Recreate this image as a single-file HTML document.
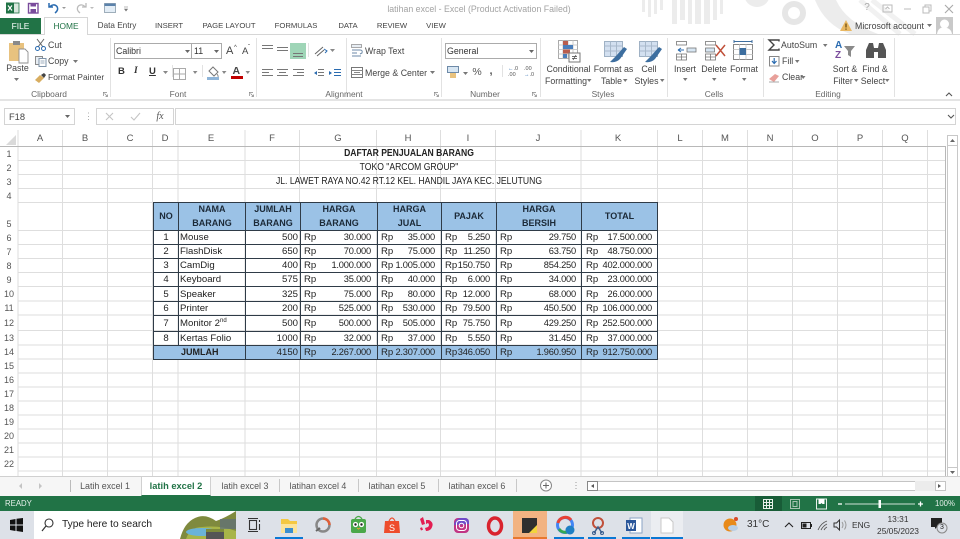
<!DOCTYPE html>
<html><head><meta charset="utf-8"><style>
html,body{margin:0;padding:0}
body{width:960px;height:539px;position:relative;overflow:hidden;background:#fff;font:9px "Liberation Sans",sans-serif;color:#444}
#w{position:absolute;left:0;top:0;width:960px;height:539px;overflow:hidden;background:#fff;filter:blur(.35px)}
.t{position:absolute;white-space:nowrap;line-height:12px}
.c{transform:translateX(-50%)}
.a{position:absolute;box-sizing:border-box}
svg{position:absolute;overflow:visible}
.h{position:absolute;width:30px;margin-left:-15px;text-align:center;top:132px;line-height:14px;font-size:9.5px;color:#555}
.r{position:absolute;left:0;width:18px;text-align:center;line-height:14px;font-size:9px;color:#555}
.s{font:10px/14px "Liberation Sans",sans-serif;color:#222;position:absolute;white-space:nowrap;transform:translateX(-50%) scaleX(.86)}
.u{font-size:7.7px}
.k{font-size:8.9px;color:#555}
table{position:absolute;left:153px;top:202px;border-collapse:collapse;table-layout:fixed;width:504px;font:10px/13px "Liberation Sans",sans-serif;color:#222}
td{border:1px solid #2f3b47;padding:0 6px 0 3px;height:13px;line-height:13px;white-space:nowrap;overflow:hidden;text-align:right;font-size:9.3px;letter-spacing:-.2px}
td:nth-child(7){padding-right:5px}
td:nth-child(8){padding:0 5px 0 4px}
td.m{text-align:center;padding:0;letter-spacing:0;font-size:9.6px}
td.l{text-align:left;padding:0 0 0 1px;letter-spacing:0;font-size:9.6px}
td.n{padding-right:2px;letter-spacing:0;font-size:9.6px}
tr.b td,th{background:#9bc2e6}
tr.b td:nth-child(6){padding-right:5px}
tr.b td:nth-child(7){padding:0 5px 0 4px}
tr.b td:nth-child(5){padding-right:6px}
th{border:1px solid #2f3b47;padding:0;font-size:9px;line-height:13.5px;font-weight:bold;color:#1c2a38}
i{font-style:normal;float:left;letter-spacing:0;font-size:9.6px}
sup{font-size:6px;line-height:0}
</style></head><body><div id="w">

<!-- watermark -->
<svg width="960" height="35" style="left:0;top:0">
<g fill="#ececec"><rect x="642" y="0" width="3" height="12"/><rect x="648" y="0" width="3" height="17"/><rect x="654" y="0" width="3" height="14"/><rect x="660" y="0" width="3" height="10"/><rect x="672" y="0" width="5" height="24"/><rect x="680" y="0" width="5" height="20"/><rect x="688" y="0" width="4" height="24"/><rect x="695" y="0" width="6" height="24"/><rect x="704" y="0" width="6" height="24"/><rect x="713" y="0" width="4" height="20"/><rect x="720" y="0" width="3" height="14"/><circle cx="757" cy="-6" r="13"/></g>
<circle cx="794" cy="13" r="9" fill="none" stroke="#e6e6e6" stroke-width="6"/>
<path d="M815 0Q825 25 850 34L878 34Q846 22 836 0Z" fill="#ececec"/>
<path d="M860 0L900 34M872 0L915 34" stroke="#f1f1f1" stroke-width="5"/>
</svg>

<!-- QAT -->
<svg width="140" height="17" style="left:0;top:0">
<rect x="11" y="3" width="8" height="10" fill="#d8e7dd" stroke="#217346" stroke-width=".8"/><rect x="6" y="2.5" width="8" height="11" fill="#217346"/><path d="M8 5.500l4 5M12 5.500l-4 5" stroke="#fff" stroke-width="1.200"/>
<rect x="28.500" y="3.500" width="9.500" height="9.500" fill="#fff" stroke="#7a4c9c" stroke-width="1.400"/><rect x="30.500" y="3.500" width="5.500" height="3" fill="#7a4c9c"/><rect x="30.500" y="9" width="5.500" height="4" fill="#7a4c9c"/>
<path d="M49 3v4h4M49.500 7Q54 3 57 6.500Q59 10 55 13" fill="none" stroke="#2a6bb0" stroke-width="1.500"/><path d="M62 7l2 2 2-2z" fill="#999"/>
<path d="M86 3v4h-4M85.500 7Q81 3 78 6.500Q76 10 80 13" fill="none" stroke="#bbb" stroke-width="1.300"/><path d="M90 7l2 2 2-2z" fill="#bbb"/>
<rect x="104.500" y="3.500" width="11" height="9" fill="#e3edf6" stroke="#8a9bab" stroke-width=".8"/><rect x="104.500" y="3.500" width="11" height="2.500" fill="#5b82ab"/>
<path d="M124 7h4M124.500 9l1.500 2 1.500-2z" stroke="#777" fill="#777" stroke-width=".6"/>
</svg>
<div class="t c" style="left:479px;top:3px;font-size:8.800px;color:#a3a3a3">latihan excel - Excel (Product Activation Failed)</div>

<!-- window controls -->
<div class="t c" style="left:867px;top:2px;font-size:10px;color:#aaa">?</div>
<svg width="100" height="17" style="left:860px;top:0"><rect x="23" y="5" width="9" height="7" fill="none" stroke="#bbb"/><path d="M25.500 9l2-2 2 2" fill="none" stroke="#bbb"/><path d="M44 9h7" stroke="#bbb"/><rect x="65" y="5" width="6" height="6" fill="none" stroke="#bbb"/><rect x="63" y="7" width="6" height="6" fill="#fff" stroke="#bbb"/><path d="M85 5l8 8M93 5l-8 8" stroke="#aaa" stroke-width="1.100"/></svg>

<!-- tabs -->
<div class="a" style="left:0;top:18px;width:41px;height:17px;background:#217346"></div>
<div class="t c" style="left:20.500px;top:20px;color:#fff;font-size:8.400px">FILE</div>
<div class="a" style="left:0;top:34px;width:960px;height:1px;background:#d6d6d6"></div>
<div class="a" style="left:44px;top:17px;width:44px;height:18px;background:#fff;border:1px solid #d6d6d6;border-bottom:0"></div>
<div class="t c" style="left:66px;top:20px;color:#217346;font-size:8.400px">HOME</div>
<div class="t c" style="left:117px;top:20px;font-size:8.200px">Data Entry</div>
<div class="t c u" style="left:169px;top:20px">INSERT</div>
<div class="t c u" style="left:229px;top:20px">PAGE LAYOUT</div>
<div class="t c u" style="left:296px;top:20px">FORMULAS</div>
<div class="t c u" style="left:348px;top:20px">DATA</div>
<div class="t c u" style="left:392px;top:20px">REVIEW</div>
<div class="t c u" style="left:436px;top:20px">VIEW</div>
<svg width="14" height="14" style="left:840px;top:19px"><path d="M6 1L12 12H0Z" fill="#e9b863"/><path d="M6 4.500v4M6 9.500v1.300" stroke="#5a3b00" stroke-width="1.100"/></svg>
<div class="t" style="left:855px;top:20px;font-size:8.800px;color:#444">Microsoft account</div>
<svg width="6" height="4" style="left:927px;top:24px"><path d="M0 0h5L2.500 3z" fill="#777"/></svg>
<svg width="17" height="17" style="left:936px;top:17px"><rect width="17" height="17" fill="#c9c9c9"/><circle cx="8.500" cy="7" r="4.500" fill="#fff"/><path d="M1 17Q2 10 8.500 10.500T16 17z" fill="#fff"/></svg>

<!-- ribbon separators -->
<div class="a" style="left:0;top:99px;width:960px;height:2px;background:#e4e4e4"></div>
<svg width="960" height="65" style="left:0;top:35px"><path d="M110.500 3V62M256.500 3V62M346.500 3V62M441.500 3V62M540.500 3V62M667.500 3V62M763.500 3V62M894.500 3V62M172.500 30V42M202.500 30V42M308.500 8V22M502.500 30V42" stroke="#e2e2e2"/></svg>

<!-- clipboard -->
<svg width="24" height="24" style="left:8px;top:40px"><rect x="1" y="3" width="15" height="18" fill="#e8c27f"/><rect x="5" y="1" width="7" height="4" fill="#8a8a8a"/><path d="M11 9h6l3 3v11H11z" fill="#fff" stroke="#8f8f8f" stroke-width=".9"/></svg>
<div class="t c" style="left:17.500px;top:62px;font-size:8.800px">Paste</div>
<svg width="6" height="4" style="left:14px;top:78px"><path d="M0 0h5L2.500 3z" fill="#777"/></svg>
<svg width="12" height="12" style="left:35px;top:39px"><path d="M2 0l6 8M9 0L3 8" stroke="#666" stroke-width="1"/><circle cx="2.500" cy="9.500" r="2" fill="none" stroke="#2a6bb0"/><circle cx="8.500" cy="9.500" r="2" fill="none" stroke="#2a6bb0"/></svg>
<div class="t" style="left:48px;top:39px;font-size:8.800px">Cut</div>
<svg width="12" height="11" style="left:35px;top:56px"><rect x=".5" y=".5" width="7" height="8" fill="#e8eef4" stroke="#8a8a8a"/><rect x="4" y="2.500" width="7" height="8" fill="#fff" stroke="#7e93a8"/><path d="M5.500 5h4M5.500 7h4" stroke="#7e93a8" stroke-width=".7"/></svg>
<div class="t" style="left:48px;top:55px;font-size:8.800px">Copy</div>
<svg width="6" height="4" style="left:73px;top:60px"><path d="M0 0h5L2.500 3z" fill="#777"/></svg>
<svg width="12" height="12" style="left:35px;top:72px"><path d="M0 8l5-5 4 3-5 5z" fill="#d8ad60"/><path d="M6 3l3-2 2 2-2 3z" fill="#444"/></svg>
<div class="t" style="left:48px;top:71px;font-size:8.500px">Format Painter</div>
<div class="t c" style="left:49px;top:88px;font-size:8.400px;color:#666">Clipboard</div>
<svg width="5" height="5" style="left:103px;top:92px"><path d="M0 .500h4M.5 0v4M1.500 1.500L4.500 4.500M4.500 2.500v2h-2" stroke="#888" fill="none" stroke-width=".7"/></svg>

<!-- font -->
<div class="a" style="left:114px;top:43px;width:78px;height:16px;background:#fff;border:1px solid #ababab"></div>
<div class="a" style="left:191px;top:43px;width:31px;height:16px;background:#fff;border:1px solid #ababab"></div>
<div class="t" style="left:116px;top:45px;font-size:8.800px;color:#333">Calibri</div>
<div class="t" style="left:194px;top:45px;font-size:8.800px;color:#333">11</div>
<svg width="120" height="6" style="left:180px;top:49px"><path d="M5 1h5L7.500 4z" fill="#666"/><path d="M34 1h5L36.500 4z" fill="#666"/></svg>
<div class="t" style="left:226px;top:45px;font-size:11px;color:#444">A</div><div class="t" style="left:234px;top:42px;font-size:6px">^</div>
<div class="t" style="left:242px;top:46px;font-size:9.500px;color:#444">A</div><div class="t" style="left:248px;top:42px;font-size:6px">ˇ</div>
<div class="t" style="left:118px;top:66px;font-size:9.500px;font-weight:bold;color:#333">B</div>
<div class="t" style="left:134px;top:66px;font:italic bold 9.500px 'Liberation Serif',serif;color:#333">I</div>
<div class="t" style="left:149px;top:66px;font-size:9.500px;font-weight:bold;color:#333;text-decoration:underline">U</div>
<svg width="100" height="16" style="left:160px;top:67px"><path d="M3 4h5L5.500 7zM33 4h4.500L35 7zM62 4h4.500L64 7zM85.500 4H90L87.800 7z" fill="#888"/><path d="M13.500 1.500h12v11h-12zM19.500 1.500v11M13.500 7h12" stroke="#aaa" fill="none"/></svg>
<svg width="14" height="14" style="left:206px;top:66px"><path d="M7 1l5 5-4 4-5-5z" fill="#fff" stroke="#777"/><path d="M11 8q1.500 2 1 3" stroke="#888" fill="none"/><rect x="1" y="11" width="12" height="3" fill="#8fb5d9"/></svg>
<div class="t" style="left:232.500px;top:65px;font-size:10.500px;font-weight:bold;color:#444">A</div>
<div class="a" style="left:231px;top:76px;width:12px;height:3px;background:#c00000"></div>

<div class="t c" style="left:178px;top:88px;font-size:8.400px;color:#666">Font</div>
<svg width="5" height="5" style="left:249px;top:92px"><path d="M0 .500h4M.5 0v4M1.500 1.500L4.500 4.500M4.500 2.500v2h-2" stroke="#888" fill="none" stroke-width=".7"/></svg>

<!-- alignment -->
<div class="a" style="left:290px;top:43px;width:16px;height:16px;background:#9fd5b7"></div>
<svg width="90" height="50" style="left:261px;top:42px"><g stroke="#777" stroke-width="1"><path d="M1 3.500h11M1 6.500h11M16 5.500h11M16 8.500h11M32 11.500h10M32 14.500h10"/><path d="M1 27.500h11M1 30.500h7M1 33.500h11M16 27.500h11M18 30.500h7M16 33.500h11M32 27.500h11M36 30.500h7M32 33.500h11M57 27.500h6M57 30.500h6M57 33.500h6"/><path d="M73 27.500h7M73 30.500h7M73 33.500h7" stroke="#2a6bb0"/></g><path d="M56 29l-3 2 3 2zM68 29l3 2-3 2z" fill="#2a6bb0"/><path d="M54 12l8-7M56 14l7-6" stroke="#666"/><path d="M63 7l3 2-2 2" stroke="#2a6bb0" fill="none"/><path d="M69 7h5l-2.500 3z" fill="#888"/></svg>
<svg width="14" height="13" style="left:351px;top:44px"><rect x=".5" y=".5" width="10" height="3" fill="#e8eef4" stroke="#888" stroke-width=".7"/><path d="M1 6h8q3 0 2 3l-2 1M1 9h5M1 12h9" stroke="#6e8aa8" fill="none"/></svg>
<div class="t" style="left:365px;top:45px;font-size:8.800px">Wrap Text</div>
<svg width="13" height="12" style="left:351px;top:67px"><rect x=".5" y=".5" width="11" height="10" fill="#fff" stroke="#777"/><path d="M.5 3.500h11M.5 7.500h11M3 5.500h6" stroke="#888"/></svg>
<div class="t" style="left:365px;top:67px;font-size:8.800px">Merge &amp; Center</div>
<svg width="6" height="4" style="left:430px;top:71px"><path d="M0 0h5L2.500 3z" fill="#777"/></svg>
<div class="t c" style="left:344px;top:88px;font-size:8.400px;color:#666">Alignment</div>
<svg width="5" height="5" style="left:434px;top:92px"><path d="M0 .500h4M.5 0v4M1.500 1.500L4.500 4.500M4.500 2.500v2h-2" stroke="#888" fill="none" stroke-width=".7"/></svg>

<!-- number -->
<div class="a" style="left:445px;top:43px;width:92px;height:16px;background:#fff;border:1px solid #ababab"></div>
<div class="t" style="left:447px;top:45px;font-size:8.800px;color:#333">General</div>
<svg width="6" height="4" style="left:529px;top:50px"><path d="M0 0h5L2.500 3z" fill="#666"/></svg>
<svg width="13" height="13" style="left:447px;top:66px"><rect x=".5" y=".5" width="11" height="6" fill="#d7e6f3" stroke="#6e8aa8"/><rect x="3" y="7" width="6" height="5" fill="#e8c27f"/></svg>
<svg width="6" height="4" style="left:463px;top:72px"><path d="M0 0h5L2.500 3z" fill="#777"/></svg>
<div class="t c" style="left:477px;top:66px;font-size:10.500px;color:#555">%</div>
<div class="t c" style="left:491px;top:65px;font-size:11px;font-weight:bold;color:#555">,</div>
<div class="t" style="left:508px;top:66px;font-size:5.500px;line-height:6px;color:#555"><span style="color:#2a6bb0">←</span>.0<br>.00</div>
<div class="t" style="left:524px;top:66px;font-size:5.500px;line-height:6px;color:#555">.00<br><span style="color:#2a6bb0">→</span>.0</div>
<div class="t c" style="left:485px;top:88px;font-size:8.400px;color:#666">Number</div>
<svg width="5" height="5" style="left:532px;top:92px"><path d="M0 .500h4M.5 0v4M1.500 1.500L4.500 4.500M4.500 2.500v2h-2" stroke="#888" fill="none" stroke-width=".7"/></svg>

<!-- styles -->
<svg width="24" height="24" style="left:558px;top:40px"><rect x=".5" y=".5" width="19" height="18" fill="#fff" stroke="#aaa"/><path d="M.5 5h19M.5 9.500h19M.5 14h19M5 .5v18M10 .5v18M15 .5v18" stroke="#ccc"/><rect x="5" y="1" width="5" height="4" fill="#b95d4d"/><rect x="5" y="5" width="10" height="4" fill="#4a7ebb"/><rect x="5" y="9.500" width="7" height="4" fill="#b95d4d"/><rect x="5" y="14" width="4" height="4" fill="#4a7ebb"/><rect x="11" y="13" width="11" height="9" fill="#fff" stroke="#777"/><path d="M14 16.500h5M14 18.500h5M18 15l-3 5" stroke="#444" stroke-width=".7"/></svg>
<div class="t c" style="left:568.500px;top:63px;font-size:8.800px">Conditional</div>
<div class="t c" style="left:566px;top:74.500px;font-size:8.800px">Formatting</div>
<svg width="5" height="4" style="left:587px;top:79px"><path d="M0 0h4.500L2.200 3z" fill="#777"/></svg>
<svg width="24" height="24" style="left:604px;top:41px"><rect x=".5" y=".5" width="18" height="15" fill="#d3e0f0" stroke="#9fb1c4"/><path d="M.5 5h18M.5 10h18M6.500 .5v15M12.500 .5v15" stroke="#a8b9cb"/><path d="M6 21l6-6 8-9 3 2-7 10q-4 4-10 3z" fill="#3d6e9f"/></svg>
<div class="t c" style="left:613.500px;top:63px;font-size:8.800px">Format as</div>
<div class="t c" style="left:611.500px;top:74.500px;font-size:8.800px">Table</div>
<svg width="5" height="4" style="left:623px;top:79px"><path d="M0 0h4.500L2.200 3z" fill="#777"/></svg>
<svg width="24" height="24" style="left:639px;top:41px"><rect x=".5" y=".5" width="18" height="15" fill="#d3e0f0" stroke="#9fb1c4"/><path d="M.5 5h18M.5 10h18M6.500 .5v15M12.500 .5v15" stroke="#a8b9cb"/><path d="M6 21l6-6 8-9 3 2-7 10q-4 4-10 3z" fill="#3d6e9f"/></svg>
<div class="t c" style="left:649px;top:63px;font-size:8.800px">Cell</div>
<div class="t c" style="left:646.500px;top:74.500px;font-size:8.800px">Styles</div>
<svg width="5" height="4" style="left:660px;top:79px"><path d="M0 0h4.500L2.200 3z" fill="#777"/></svg>
<div class="t c" style="left:603px;top:88px;font-size:8.400px;color:#666">Styles</div>

<!-- cells -->
<svg width="20" height="20" style="left:676px;top:41px"><g fill="#fff" stroke="#777" stroke-width=".8"><rect x=".5" y=".5" width="10" height="3.500"/><rect x="11" y="7" width="9" height="4" fill="#d7e6f3"/><rect x=".5" y="13" width="10" height="6"/><path d="M5.500 13v6M.5 16h10"/></g><path d="M2 9h6M2 9l3-2M2 9l3 2" stroke="#2a6bb0" fill="none"/></svg>
<div class="t c" style="left:685px;top:63px;font-size:8.800px">Insert</div>
<svg width="5" height="4" style="left:683px;top:78px"><path d="M0 0h4.500L2.200 3z" fill="#777"/></svg>
<svg width="22" height="22" style="left:705px;top:41px"><g fill="#fff" stroke="#777" stroke-width=".8"><rect x=".5" y=".5" width="10" height="3.500"/><rect x=".5" y="7" width="9" height="4" fill="#d7e6f3"/><rect x=".5" y="13" width="10" height="6"/><path d="M5.500 13v6M.5 16h10"/></g><path d="M11 4l9 11M20 4l-9 11" stroke="#c0503a" stroke-width="1.500"/></svg>
<div class="t c" style="left:714px;top:63px;font-size:8.800px">Delete</div>
<svg width="5" height="4" style="left:712px;top:78px"><path d="M0 0h4.500L2.200 3z" fill="#777"/></svg>
<svg width="22" height="22" style="left:733px;top:40px"><rect x=".5" y="4.500" width="19" height="15" fill="#fff" stroke="#888"/><path d="M.5 9.500h19M.5 14.500h19M6.500 4.500v15M13 4.500v15" stroke="#ccc"/><rect x="6.500" y="8" width="6.500" height="7" fill="#3d6e9f"/><path d="M1 1.500h18M1 0v3M19 0v3" stroke="#3d6e9f"/></svg>
<div class="t c" style="left:744px;top:63px;font-size:8.800px">Format</div>
<svg width="5" height="4" style="left:742px;top:78px"><path d="M0 0h4.500L2.200 3z" fill="#777"/></svg>
<div class="t c" style="left:714px;top:88px;font-size:8.400px;color:#666">Cells</div>

<!-- editing -->
<svg width="12" height="12" style="left:768px;top:39px"><path d="M11 2.500V1H1l5 5-5 5h10V9.500" fill="none" stroke="#444" stroke-width="1.400"/></svg>
<div class="t" style="left:781px;top:39px;font-size:8.800px">AutoSum</div>
<svg width="5" height="4" style="left:823px;top:44px"><path d="M0 0h4.500L2.200 3z" fill="#777"/></svg>
<svg width="11" height="11" style="left:769px;top:56px"><rect x=".5" y=".5" width="9.500" height="9.500" fill="#fff" stroke="#888"/><path d="M5.200 2v5M3 5l2.200 2.500L7.500 5" stroke="#2a6bb0" fill="none" stroke-width="1.200"/></svg>
<div class="t" style="left:782px;top:55px;font-size:8.800px">Fill</div>
<svg width="5" height="4" style="left:795px;top:60px"><path d="M0 0h4.500L2.200 3z" fill="#777"/></svg>
<svg width="12" height="11" style="left:769px;top:72px"><path d="M0 7l6-5 4 2-5 6z" fill="#e8a09a"/><path d="M0 10h10" stroke="#aaa"/></svg>
<div class="t" style="left:782px;top:71px;font-size:8.800px">Clear</div>
<svg width="5" height="4" style="left:801px;top:76px"><path d="M0 0h4.500L2.200 3z" fill="#777"/></svg>
<div class="t" style="left:835px;top:40px;font-size:10px;font-weight:bold;color:#2a6bb0">A</div>
<div class="t" style="left:835px;top:50px;font-size:10px;font-weight:bold;color:#7a4c9c">Z</div>
<svg width="12" height="12" style="left:844px;top:46px"><path d="M0 0h11L7 5v6L4 9V5z" fill="#8a8a8a"/></svg>
<div class="t c" style="left:845px;top:63px;font-size:8.800px">Sort &amp;</div>
<div class="t c" style="left:843px;top:74.500px;font-size:8.800px">Filter</div>
<svg width="5" height="4" style="left:854px;top:79px"><path d="M0 0h4.500L2.200 3z" fill="#777"/></svg>
<svg width="20" height="18" style="left:866px;top:42px"><path d="M3 1h4l1 5v10H0V8zM13 1h4l3 7v8h-8V6z" fill="#555"/><rect x="8" y="6" width="4" height="4" fill="#555"/></svg>
<div class="t c" style="left:875px;top:63px;font-size:8.800px">Find &amp;</div>
<div class="t c" style="left:873px;top:74.500px;font-size:8.800px">Select</div>
<svg width="5" height="4" style="left:885px;top:79px"><path d="M0 0h4.500L2.200 3z" fill="#777"/></svg>
<div class="t c" style="left:828px;top:88px;font-size:8.400px;color:#666">Editing</div>
<svg width="8" height="5" style="left:945px;top:92px"><path d="M1 4l3-3 3 3" fill="none" stroke="#555" stroke-width="1.100"/></svg>

<!-- formula bar -->
<div class="a" style="left:0;top:101px;width:960px;height:29px;background:#fff"></div>
<div class="a" style="left:4px;top:108px;width:71px;height:17px;background:#fff;border:1px solid #d4d4d4"></div>
<div class="t" style="left:9px;top:111px;font-size:9.300px;color:#444">F18</div>
<svg width="6" height="4" style="left:65px;top:115px"><path d="M0 0h5L2.500 3z" fill="#666"/></svg>
<div class="t" style="left:84px;top:110px;font-size:9px;color:#aaa">⋮</div>
<div class="a" style="left:96px;top:108px;width:78px;height:17px;background:#fff;border:1px solid #d4d4d4"></div>
<svg width="80" height="12" style="left:100px;top:111px"><path d="M6 2l7 7M13 2l-7 7" stroke="#c4c4c4" stroke-width="1.100"/><path d="M31 6l3 3 6-7" fill="none" stroke="#c4c4c4" stroke-width="1.100"/></svg>
<div class="t c" style="left:160px;top:111px;font:italic 10px 'Liberation Serif',serif;color:#555">fx</div>
<div class="a" style="left:175px;top:108px;width:781px;height:17px;background:#fff;border:1px solid #d4d4d4"></div>
<svg width="8" height="5" style="left:947px;top:114px"><path d="M1 1l3 3 3-3" fill="none" stroke="#555" stroke-width="1.100"/></svg>

<!-- grid -->
<svg width="960" height="350" style="left:0;top:130px">
<path d="M18 0V346M62.500 0V346M107.500 0V346M152.500 0V346M178 0V346M245 0V346M299.500 0V346M376.500 0V346M440.500 0V346M495.500 0V346M581 0V346M657.500 0V346M702.500 0V346M747.500 0V346M792.500 0V346M837.500 0V346M882.500 0V346M927.500 0V346" stroke="#dedede" fill="none"/>
<path d="M18 30.500H945M18 44.500H945M18 58.500H945M18 72.500H945M18 100.500H945M18 114.500H945M18 128.500H945M18 142.500H945M18 156.500H945M18 171H945M18 185H945M18 200.500H945M18 215H945M18 229H945M18 243H945M18 257H945M18 271H945M18 285H945M18 299H945M18 313H945M18 327H945M18 341H945" stroke="#dedede" fill="none"/>
<path d="M0 16.500H945.500V346" stroke="#b8b8b8" fill="none"/>
<path d="M6 15L16 15 16 5z" fill="#dadada"/>
</svg>
<div class="h" style="left:40px">A</div><div class="h" style="left:85px">B</div><div class="h" style="left:130px">C</div><div class="h" style="left:165px">D</div><div class="h" style="left:211px">E</div><div class="h" style="left:272px">F</div><div class="h" style="left:338px">G</div><div class="h" style="left:408px">H</div><div class="h" style="left:468px">I</div><div class="h" style="left:538px">J</div><div class="h" style="left:618px">K</div><div class="h" style="left:680px">L</div><div class="h" style="left:725px">M</div><div class="h" style="left:770px">N</div><div class="h" style="left:815px">O</div><div class="h" style="left:860px">P</div><div class="h" style="left:905px">Q</div>
<div class="r" style="top:147px">1</div><div class="r" style="top:161px">2</div><div class="r" style="top:175px">3</div><div class="r" style="top:189px">4</div><div class="r" style="top:217px">5</div><div class="r" style="top:231px">6</div><div class="r" style="top:245px">7</div><div class="r" style="top:259px">8</div><div class="r" style="top:273px">9</div><div class="r" style="top:287px">10</div><div class="r" style="top:301px">11</div><div class="r" style="top:316px">12</div><div class="r" style="top:331px">13</div><div class="r" style="top:345px">14</div><div class="r" style="top:359px">15</div><div class="r" style="top:373px">16</div><div class="r" style="top:387px">17</div><div class="r" style="top:401px">18</div><div class="r" style="top:415px">19</div><div class="r" style="top:429px">20</div><div class="r" style="top:443px">21</div><div class="r" style="top:457px">22</div>

<div class="s" style="left:408.500px;top:147px;font-weight:bold">DAFTAR PENJUALAN BARANG</div>
<div class="s" style="left:408.500px;top:161px">TOKO "ARCOM GROUP"</div>
<div class="s" style="left:408.500px;top:175px">JL. LAWET RAYA NO.42 RT.12 KEL. HANDIL JAYA KEC. JELUTUNG</div>

<table>
<colgroup><col style="width:25px"><col style="width:67px"><col style="width:55px"><col style="width:77px"><col style="width:64px"><col style="width:55px"><col style="width:85px"><col style="width:76px"></colgroup>
<tr style="height:28px"><th>NO</th><th>NAMA<br>BARANG</th><th>JUMLAH<br>BARANG</th><th>HARGA<br>BARANG</th><th>HARGA<br>JUAL</th><th>PAJAK</th><th>HARGA<br>BERSIH</th><th>TOTAL</th></tr>
<tr><td class="m">1</td><td class="l">Mouse</td><td class="n">500</td><td><i>Rp</i>30.000</td><td><i>Rp</i>35.000</td><td><i>Rp</i>5.250</td><td><i>Rp</i>29.750</td><td><i>Rp</i>17.500.000</td></tr>
<tr><td class="m">2</td><td class="l">FlashDisk</td><td class="n">650</td><td><i>Rp</i>70.000</td><td><i>Rp</i>75.000</td><td><i>Rp</i>11.250</td><td><i>Rp</i>63.750</td><td><i>Rp</i>48.750.000</td></tr>
<tr><td class="m">3</td><td class="l">CamDig</td><td class="n">400</td><td><i>Rp</i>1.000.000</td><td><i>Rp</i>1.005.000</td><td><i>Rp</i>150.750</td><td><i>Rp</i>854.250</td><td><i>Rp</i>402.000.000</td></tr>
<tr><td class="m">4</td><td class="l">Keyboard</td><td class="n">575</td><td><i>Rp</i>35.000</td><td><i>Rp</i>40.000</td><td><i>Rp</i>6.000</td><td><i>Rp</i>34.000</td><td><i>Rp</i>23.000.000</td></tr>
<tr style="height:15px"><td class="m">5</td><td class="l">Speaker</td><td class="n">325</td><td><i>Rp</i>75.000</td><td><i>Rp</i>80.000</td><td><i>Rp</i>12.000</td><td><i>Rp</i>68.000</td><td><i>Rp</i>26.000.000</td></tr>
<tr><td class="m">6</td><td class="l">Printer</td><td class="n">200</td><td><i>Rp</i>525.000</td><td><i>Rp</i>530.000</td><td><i>Rp</i>79.500</td><td><i>Rp</i>450.500</td><td><i>Rp</i>106.000.000</td></tr>
<tr style="height:16px"><td class="m">7</td><td class="l">Monitor 2<sup>nd</sup></td><td class="n">500</td><td><i>Rp</i>500.000</td><td><i>Rp</i>505.000</td><td><i>Rp</i>75.750</td><td><i>Rp</i>429.250</td><td><i>Rp</i>252.500.000</td></tr>
<tr><td class="m">8</td><td class="l">Kertas Folio</td><td class="n">1000</td><td><i>Rp</i>32.000</td><td><i>Rp</i>37.000</td><td><i>Rp</i>5.550</td><td><i>Rp</i>31.450</td><td><i>Rp</i>37.000.000</td></tr>
<tr class="b"><td colspan="2" style="text-align:left;padding-left:27px;font-weight:bold;font-size:9px;letter-spacing:0">JUMLAH</td><td class="n">4150</td><td><i>Rp</i>2.267.000</td><td><i>Rp</i>2.307.000</td><td><i>Rp</i>346.050</td><td><i>Rp</i>1.960.950</td><td><i>Rp</i>912.750.000</td></tr>
</table>

<!-- vertical scrollbar -->
<div class="a" style="left:947px;top:135px;width:11px;height:343px;background:#fff;border:1px solid #c8c8c8"></div>
<div class="a" style="left:947px;top:135px;width:11px;height:11px;border:1px solid #c8c8c8;background:#fff"></div>
<div class="a" style="left:947px;top:467px;width:11px;height:11px;border:1px solid #c8c8c8;background:#fff"></div>
<svg width="11" height="343" style="left:947px;top:135px"><path d="M3 7h5L5.500 4zM3 336h5l-2.500 3z" fill="#666"/></svg>

<!-- sheet tabs -->
<div class="a" style="left:0;top:476px;width:960px;height:20px;background:#f6f6f6"></div>
<div class="a" style="left:0;top:476px;width:141px;height:1px;background:#d0d0d0"></div>
<div class="a" style="left:141px;top:476px;width:70px;height:20px;background:#fff;border-left:1px solid #d0d0d0;border-right:1px solid #d0d0d0;border-top:1px solid #d0d0d0;border-bottom:1px solid #217346"></div>
<div class="a" style="left:211px;top:476px;width:749px;height:1px;background:#d0d0d0"></div>
<svg width="60" height="12" style="left:15px;top:480px"><path d="M7 3L4 6l3 3zM24 3l3 3-3 3z" fill="#c4c4c4"/><path d="M55.500 0V12" stroke="#bbb"/></svg>
<div class="t c k" style="left:105px;top:479.500px">Latih excel 1</div>
<div class="t c" style="left:176px;top:479.500px;font-size:9.300px;font-weight:bold;color:#217346">latih excel 2</div>
<div class="t c k" style="left:245px;top:479.500px">latih excel 3</div>
<div class="t c k" style="left:318px;top:479.500px">latihan excel 4</div>
<div class="t c k" style="left:397px;top:479.500px">latihan excel 5</div>
<div class="t c k" style="left:477px;top:479.500px">latihan excel 6</div>
<svg width="320" height="14" style="left:270px;top:479px"><path d="M9.500 0V13M88.500 0V13M168.500 0V13M246.500 0V13" stroke="#c8c8c8"/><circle cx="276" cy="6.500" r="5.500" fill="#fff" stroke="#888"/><path d="M273 6.500h6M276 3.500v6" stroke="#666"/><path d="M306 3v1M306 6v1M306 9v1" stroke="#999"/></svg>
<div class="a" style="left:587px;top:481px;width:348px;height:10px;background:#fff;border:1px solid #c4c4c4"></div>
<div class="a" style="left:587px;top:481px;width:11px;height:10px;background:#fff;border:1px solid #888"></div>
<div class="a" style="left:915px;top:481px;width:20px;height:10px;background:#ececec"></div>
<div class="a" style="left:935px;top:481px;width:11px;height:10px;background:#fff;border:1px solid #c4c4c4"></div>
<svg width="362" height="10" style="left:587px;top:481px"><path d="M7 3L4 5l3 2zM351 3l3 2-3 2z" fill="#555"/></svg>

<!-- status bar -->
<div class="a" style="left:0;top:496px;width:960px;height:15px;background:#217346"></div>
<div class="t" style="left:5px;top:497.500px;font-size:7.800px;color:#e6f0ea">READY</div>
<div class="a" style="left:755px;top:496px;width:27px;height:15px;background:#185c37"></div>
<svg width="200" height="15" style="left:760px;top:496px"><g fill="none" stroke="#e8f0ea"><path d="M3.500 3.500h9v9h-9zM3.500 6.500h9M3.500 9.500h9M6.500 3.500v9M9.500 3.500v9"/><path d="M30.500 3.500h9v9h-9z" stroke="#a8c4b2"/><path d="M33 5.500h4v5h-4z" stroke="#a8c4b2"/></g><rect x="56.500" y="3" width="10" height="10" fill="none" stroke="#e8f0ea"/><path d="M58.500 3v5h2l1-1 1 1h2V3z" fill="#fff"/><path d="M78 8h4" stroke="#fff" stroke-width="1.300"/><path d="M85 8h70" stroke="#cfe0d5"/><rect x="118.500" y="4" width="2.500" height="8" fill="#fff"/><path d="M158 8h5M160.500 5.500v5" stroke="#fff" stroke-width="1.300"/></svg>
<div class="t" style="left:935px;top:497.500px;font-size:7.800px;color:#e6f0ea">100%</div>

<!-- taskbar -->
<div class="a" style="left:0;top:511px;width:960px;height:28px;background:#dde1e8"></div>
<svg width="14" height="14" style="left:10px;top:518px"><path d="M0 2l5.500-1v5.500H0zM6.500 .8L13 0v6.500H6.500zM0 7.500h5.500V13L0 12zM6.500 7.500H13V14l-6.500-1z" fill="#111"/></svg>
<div class="a" style="left:34px;top:511px;width:202px;height:28px;background:#fff"></div>
<svg width="14" height="14" style="left:41px;top:518px"><circle cx="8" cy="5" r="4" fill="none" stroke="#333" stroke-width="1.100"/><path d="M5 8l-4 5" stroke="#333" stroke-width="1.200"/></svg>
<div class="t" style="left:62px;top:519px;font-size:10.200px;color:#222">Type here to search</div>
<svg width="56" height="28" style="left:180px;top:511px"><path d="M0 28Q4 12 15 7Q25 2 36 10Q45 7 56 0V28Z" fill="#7f8a3e"/><path d="M6 28Q10 16 22 16Q40 14 56 20V28Z" fill="#a8b548"/><ellipse cx="22" cy="21" rx="16" ry="4" fill="#6ab3d8"/><rect x="26" y="18" width="18" height="4" fill="#7d8a3a"/><rect x="26" y="21" width="18" height="7" fill="#555"/><rect x="40" y="8" width="16" height="10" fill="#5d6e7e" opacity=".7"/></svg>
<!-- taskbar icons -->
<svg width="700" height="28" style="left:240px;top:511px">
<g stroke="#333" fill="none"><rect x="9.500" y="9.500" width="7" height="9" stroke-width="1.100"/><path d="M8 7.500h10M8 20.500h10M19.500 9v2M19.500 13v6" stroke-width="1.100"/></g>
<path d="M41 8h7l2 2h7v12H41z" fill="#f4c842"/><path d="M41 13h16v9H41z" fill="#fbe39a"/><path d="M45 17h8v5h-8z" fill="#3b8ed0"/>
<rect x="35" y="26" width="28" height="2" fill="#0a78d4"/>
<circle cx="83" cy="14" r="6.500" fill="none" stroke="#888" stroke-width="2.500"/><path d="M83 7.500a6.500 6.500 0 0 1 6.500 6.500" fill="none" stroke="#e0603a" stroke-width="2.500"/><path d="M76 20l4-3" stroke="#666" stroke-width="2"/>
<rect x="111" y="8" width="15" height="14" rx="2" fill="#4aa84a"/><path d="M115 8q3.500-5 7 0" fill="none" stroke="#4aa84a" stroke-width="1.300"/><circle cx="115.500" cy="13.500" r="2.600" fill="#fff"/><circle cx="121.500" cy="13.500" r="2.600" fill="#fff"/><circle cx="115.500" cy="13.500" r="1.200" fill="#222"/><circle cx="121.500" cy="13.500" r="1.200" fill="#222"/><path d="M117 17l1.500 1 1.500-1" stroke="#e9a430" fill="none"/>
<path d="M145 10h14l1 12h-16z" fill="#ee4d2d"/><path d="M149 10q3-6 6 0" fill="none" stroke="#ee4d2d" stroke-width="1.200"/><text x="152" y="20" font-size="9" fill="#fff" text-anchor="middle" font-family="Liberation Sans">S</text>
<path d="M180 8l3-2 2 7-3 1zM180 17l2-.8 1 2.500-2 .8zM186 9h3q6 3 2 9-2 2-5 2l-1-3 3-1q2-2 0-4l-2 1z" fill="#e31e52"/>
<rect x="214" y="7" width="15" height="15" rx="4" fill="#c13584"/><path d="M214 14a8 8 0 0 1 7-7h4a4 4 0 0 1 4 4v2z" fill="#6f4cc9"/><rect x="216.500" y="9.500" width="10" height="10" rx="3" fill="none" stroke="#fff"/><circle cx="221.500" cy="14.500" r="2.300" fill="none" stroke="#fff"/>
<ellipse cx="255" cy="15" rx="6.500" ry="8" fill="none" stroke="#d9232e" stroke-width="3.500"/>
<rect x="273" y="0" width="34" height="28" fill="#f2b382"/><rect x="273" y="26" width="34" height="2" fill="#e8772e"/><rect x="282" y="7" width="15" height="15" fill="#2f2f2f"/><path d="M297 14v8h-8z" fill="#f2d43d"/>
<circle cx="325" cy="14" r="7.500" fill="none" stroke="#4285f4" stroke-width="3"/><path d="M318 12a7.500 7.500 0 0 1 13-3" fill="none" stroke="#e94235" stroke-width="3"/><path d="M319 18a7.500 7.500 0 0 0 8 3" fill="none" stroke="#34a853" stroke-width="3"/><circle cx="330" cy="19" r="4.500" fill="#1f7fc4"/><rect x="314" y="26" width="30" height="2" fill="#0a78d4"/>
<circle cx="358" cy="12" r="5" fill="none" stroke="#c0503a" stroke-width="2"/><path d="M354 22l4-6 4 6" stroke="#3a5f8f" fill="none" stroke-width="1.500"/><circle cx="354" cy="22" r="1.500" fill="none" stroke="#3a5f8f"/><circle cx="362" cy="22" r="1.500" fill="none" stroke="#3a5f8f"/><rect x="348" y="26" width="28" height="2" fill="#0a78d4"/>
<rect x="390" y="7" width="12" height="15" fill="#fff" stroke="#8aa3c4"/><rect x="386" y="9" width="10" height="11" fill="#2b579a"/><text x="391" y="18" font-size="8" font-weight="bold" fill="#fff" text-anchor="middle" font-family="Liberation Sans">W</text><rect x="382" y="26" width="28" height="2" fill="#0a78d4"/>
<rect x="411" y="0" width="32" height="28" fill="#ebedf1"/><path d="M421 7h8l4 4v11h-12z" fill="#fff" stroke="#c8c8c8"/><rect x="411" y="26" width="32" height="2" fill="#0a78d4"/>
<circle cx="490" cy="14" r="6.500" fill="#e88a1a"/><circle cx="496" cy="8" r="2" fill="#d94a2a"/><ellipse cx="493" cy="17" rx="5" ry="3" fill="#b9cfe6"/>
<path d="M545 16l4-4 4 4" fill="none" stroke="#222" stroke-width="1.100"/>
<rect x="561.500" y="11.500" width="9" height="6" fill="none" stroke="#222"/><rect x="562.500" y="12.500" width="4" height="4" fill="#222"/><rect x="571" y="13" width="1" height="3" fill="#222"/>
<path d="M578 19Q581 12 587 10M581 19Q583 15 587 13M584 19q1-2 3-3" fill="none" stroke="#555" stroke-width=".9"/>
<path d="M594 12h2.500l3-3v10l-3-3H594z" fill="none" stroke="#333"/><path d="M602 11q2 3 0 6M604.500 9.500q3 4.500 0 9" fill="none" stroke="#999"/>
<path d="M691 7h11v9h-5l-2 2v-2h-4z" fill="#222"/>
<circle cx="702" cy="17" r="5" fill="#dde1e8" stroke="#888"/>
</svg>
<div class="t" style="left:747px;top:519px;font-size:10px;color:#333">31°C</div>
<div class="t" style="left:852px;top:519px;font-size:8.400px;color:#333">ENG</div>
<div class="t c" style="left:898px;top:513px;font-size:8.400px;color:#333">13:31</div>
<div class="t c" style="left:898px;top:525px;font-size:8.400px;color:#333">25/05/2023</div>
<div class="t c" style="left:942px;top:522px;font-size:7px;color:#222">3</div>
</div></body></html>
